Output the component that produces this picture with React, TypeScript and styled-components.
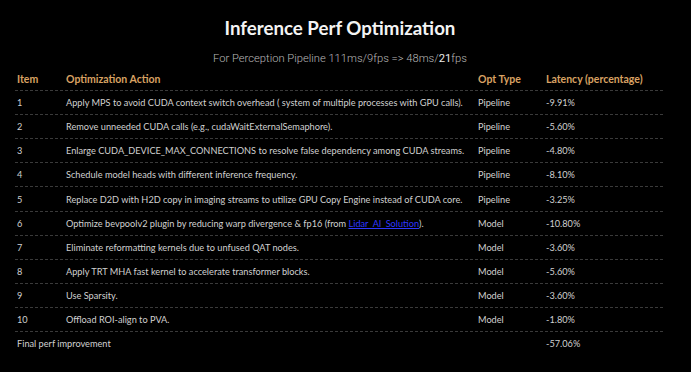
import React from "react";
import styled, { createGlobalStyle } from "styled-components";

const GlobalStyle = createGlobalStyle`
  html, body {
    margin: 0;
    padding: 0;
    background: #000;
  }
  body {
    font-family: "Lato", "Open Sans", sans-serif;
    color: #d2d2d2;
  }
`;

const Page = styled.div`
  width: 691px;
  height: 372px;
  background: #000;
  padding: 14px 0 0 15px;
  box-sizing: border-box;
  overflow: hidden;
`;

const Header = styled.div`
  width: 650px;
`;

const Title = styled.h1`
  margin: 0;
  text-align: center;
  font-family: "Lato", sans-serif;
  font-weight: 700;
  font-size: 18.7px;
  line-height: 28px;
  color: #f4f4f4;
`;

const Subtitle = styled.div`
  margin-top: 9px;
  text-align: center;
  font-family: "Roboto", sans-serif;
  font-weight: 300;
  font-size: 11.2px;
  line-height: 16px;
  color: #b8b8b8;
`;

const Strong = styled.span`
  color: #eaeaea;
  font-weight: 400;
`;

const Table = styled.div`
  margin-top: 0px;
  width: 648px;
`;

const Row = styled.div<{ $head?: boolean; $last?: boolean }>`
  display: grid;
  grid-template-columns: 49px 412px 68px 1fr;
  align-items: center;
  height: 23.1px;
  border-bottom: ${(p) => (p.$last ? "none" : "1px dashed #3a3a3a")};
  font-size: ${(p) => (p.$head ? "10.5px" : "9.2px")};
  font-weight: ${(p) => (p.$head ? 700 : 400)};
  color: ${(p) => (p.$head ? "#d9a263" : "#d0d0d0")};
  white-space: nowrap;
`;

const Cell = styled.div<{ $span?: number }>`
  padding-left: 2px;
  grid-column: ${(p) => (p.$span ? `span ${p.$span}` : "auto")};
`;

const Link = styled.a`
  color: #2f37ff;
  text-decoration: underline;
`;

type Item = {
  action: React.ReactNode;
  type: string;
  latency: string;
};

const items: Item[] = [
  { action: "Apply MPS to avoid CUDA context switch overhead ( system of multiple processes with GPU calls).", type: "Pipeline", latency: "-9.91%" },
  { action: "Remove unneeded CUDA calls (e.g., cudaWaitExternalSemaphore).", type: "Pipeline", latency: "-5.60%" },
  { action: "Enlarge CUDA_DEVICE_MAX_CONNECTIONS to resolve false dependency among CUDA streams.", type: "Pipeline", latency: "-4.80%" },
  { action: "Schedule model heads with different inference frequency.", type: "Pipeline", latency: "-8.10%" },
  { action: "Replace D2D with H2D copy in imaging streams to utilize GPU Copy Engine instead of CUDA core.", type: "Pipeline", latency: "-3.25%" },
  {
    action: (
      <>
        Optimize bevpoolv2 plugin by reducing warp divergence &amp; fp16 (from <Link href="#">Lidar_AI_Solution</Link>).
      </>
    ),
    type: "Model",
    latency: "-10.80%",
  },
  { action: "Eliminate reformatting kernels due to unfused QAT nodes.", type: "Model", latency: "-3.60%" },
  { action: "Apply TRT MHA fast kernel to accelerate transformer blocks.", type: "Model", latency: "-5.60%" },
  { action: "Use Sparsity.", type: "Model", latency: "-3.60%" },
  { action: "Offload ROI-align to PVA.", type: "Model", latency: "-1.80%" },
];

export default function App() {
  return (
    <>
      <GlobalStyle />
      <Page>
        <Header>
          <Title>Inference Perf Optimization</Title>
          <Subtitle>
            For Perception Pipeline 111ms/9fps =&gt; 48ms/<Strong>21</Strong>fps
          </Subtitle>
        </Header>
        <Table>
          <Row $head>
            <Cell>Item</Cell>
            <Cell>Optimization Action</Cell>
            <Cell>Opt Type</Cell>
            <Cell>Latency (percentage)</Cell>
          </Row>
          {items.map((it, i) => (
            <Row key={i}>
              <Cell>{i + 1}</Cell>
              <Cell>{it.action}</Cell>
              <Cell>{it.type}</Cell>
              <Cell>{it.latency}</Cell>
            </Row>
          ))}
          <Row $last>
            <Cell $span={3}>Final perf improvement</Cell>
            <Cell>-57.06%</Cell>
          </Row>
        </Table>
      </Page>
    </>
  );
}
